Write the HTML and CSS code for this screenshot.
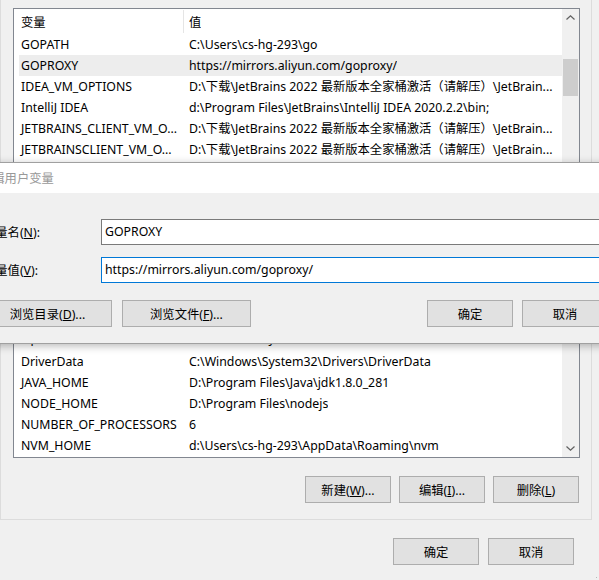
FILE: index.html
```html
<!DOCTYPE html>
<html lang="zh-CN">
<head>
<meta charset="utf-8">
<title>环境变量</title>
<link rel="stylesheet" href="styles.css">
</head>
<body>
<div class="window">
  <div class="frame">
    <div class="list">
      <div class="list-main">
        <div class="list-head">
          <div class="c1">变量</div>
          <div class="c2">值</div>
        </div>
        <div class="row"><div class="c1">GOPATH</div><div class="c2">C:\Users\cs-hg-293\go</div></div>
        <div class="row sel"><div class="c1">GOPROXY</div><div class="c2">https://mirrors.aliyun.com/goproxy/</div></div>
        <div class="row"><div class="c1">IDEA_VM_OPTIONS</div><div class="c2">D:\下载\JetBrains 2022 最新版本全家桶激活（请解压）\JetBrain...</div></div>
        <div class="row"><div class="c1">IntelliJ IDEA</div><div class="c2">d:\Program Files\JetBrains\IntelliJ IDEA 2020.2.2\bin;</div></div>
        <div class="row"><div class="c1">JETBRAINS_CLIENT_VM_O...</div><div class="c2">D:\下载\JetBrains 2022 最新版本全家桶激活（请解压）\JetBrain...</div></div>
        <div class="row"><div class="c1">JETBRAINSCLIENT_VM_O...</div><div class="c2">D:\下载\JetBrains 2022 最新版本全家桶激活（请解压）\JetBrain...</div></div>
        <div class="row"><div class="c1">JETBRAINS_GATEWAY_V...</div><div class="c2">D:\下载\JetBrains 2022 最新版本全家桶激活（请解压）\JetBrain...</div></div>
        <div class="row"><div class="c1">OneDrive</div><div class="c2">C:\Users\cs-hg-293\OneDrive</div></div>
        <div class="row"><div class="c1">Path</div><div class="c2">C:\Users\cs-hg-293\AppData\Local\Microsoft\WindowsApps;</div></div>
        <div class="row"><div class="c1">TEMP</div><div class="c2">C:\Users\cs-hg-293\AppData\Local\Temp</div></div>
        <div class="row"><div class="c1">TMP</div><div class="c2">C:\Users\cs-hg-293\AppData\Local\Temp</div></div>
        <div class="row"><div class="c1">ComSpec</div><div class="c2">C:\Windows\system32\cmd.exe</div></div>
        <div class="row"><div class="c1">ChocolateyInstall</div><div class="c2">C:\ProgramData\chocolatey</div></div>
        <div class="row"><div class="c1">configsetroot</div><div class="c2">C:\Windows\ConfigSetRoot</div></div>
        <div class="row"><div class="c1">OpenSSL</div><div class="c2">C:\Windows\System32\</div></div>
        <div class="row shifted"><div class="c1">DriverData</div><div class="c2">C:\Windows\System32\Drivers\DriverData</div></div>
        <div class="row"><div class="c1">JAVA_HOME</div><div class="c2">D:\Program Files\Java\jdk1.8.0_281</div></div>
        <div class="row"><div class="c1">NODE_HOME</div><div class="c2">D:\Program Files\nodejs</div></div>
        <div class="row"><div class="c1">NUMBER_OF_PROCESSORS</div><div class="c2">6</div></div>
        <div class="row"><div class="c1">NVM_HOME</div><div class="c2">d:\Users\cs-hg-293\AppData\Roaming\nvm</div></div>
      </div>
      <div class="vscroll">
        <div class="arrow">
          <svg width="9" height="5" viewBox="0 0 9 5"><path d="M0.5 4.5 L4.5 0.8 L8.5 4.5" fill="none" stroke="#606060" stroke-width="1.2"/></svg>
        </div>
        <div class="track"><div class="thumb"></div></div>
        <div class="arrow">
          <svg width="9" height="5" viewBox="0 0 9 5"><path d="M0.5 0.5 L4.5 4.2 L8.5 0.5" fill="none" stroke="#606060" stroke-width="1.2"/></svg>
        </div>
      </div>
    </div>
    <div class="btn-row">
      <button class="btn">新建(<u>W</u>)...</button>
      <button class="btn">编辑(<u>I</u>)...</button>
      <button class="btn">删除(<u>L</u>)</button>
    </div>
  </div>
  <div class="footer">
    <button class="btn">确定</button>
    <button class="btn">取消</button>
  </div>
</div>

<div class="grip"></div>

<div class="dialog">
  <div class="dlg-title">编辑用户变量</div>
  <div class="dlg-body">
    <div class="field">
      <label class="lbl">变量名(<u>N</u>):</label>
      <div class="input">GOPROXY</div>
    </div>
    <div class="field">
      <label class="lbl">变量值(<u>V</u>):</label>
      <div class="input focus">https://mirrors.aliyun.com/goproxy/</div>
    </div>
    <div class="dlg-buttons">
      <button class="btn wide">浏览目录(<u>D</u>)...</button>
      <button class="btn wide">浏览文件(<u>F</u>)...</button>
      <div class="spacer"></div>
      <button class="btn">确定</button>
      <button class="btn">取消</button>
    </div>
  </div>
</div>
</body>
</html>
```

FILE: styles.css
```css
html, body {
  margin: 0;
  padding: 0;
  width: 599px;
  height: 580px;
  overflow: hidden;
  background: #f0f0f0;
}
body {
  position: relative;
  font-family: "Noto Sans", "Noto Sans CJK SC", sans-serif;
  font-size: 12.3px;
  color: #000;
}
.window {
  width: 599px;
  height: 580px;
}
.frame {
  width: 592px;
  box-sizing: border-box;
  border: 1px solid #dcdcdc;
  border-top: none;
  padding: 8px 11px 16px 12px;
}
.list {
  width: 567px;
  height: 450px;
  box-sizing: border-box;
  border: 1px solid #828790;
  background: #fff;
  display: flex;
  overflow: hidden;
}
.list-main {
  flex: 1;
  padding-left: 5px;
  overflow: hidden;
}
.list-head, .row {
  display: flex;
  white-space: nowrap;
}
.list-head {
  height: 25px;
}
.list-head .c1, .list-head .c2 {
  height: 23px;
  margin-top: 1px;
  line-height: 25px;
}
.list-head .c1 {
  border-right: 1px solid #e5e5e5;
}
.row {
  height: 21px;
  line-height: 21px;
}
.row.shifted {
  height: 23px;
  line-height: 25px;
}
.row.sel {
  background: #ededed;
}
.c1 {
  width: 165px;
  box-sizing: border-box;
  padding-left: 2px;
  overflow: hidden;
}
.c2 {
  padding-left: 5px;
  overflow: hidden;
}
.vscroll {
  width: 17px;
  flex: none;
  background: #f0f0f0;
  display: flex;
  flex-direction: column;
}
.arrow {
  height: 17px;
  display: flex;
  align-items: center;
  justify-content: center;
}
.track {
  flex: 1;
  padding-top: 33px;
}
.thumb {
  height: 37px;
  margin: 0 1px;
  background: #cdcdcd;
}
.btn-row {
  display: flex;
  justify-content: flex-end;
  gap: 8px;
  margin-top: 18px;
  padding-right: 1px;
}
.btn {
  font: inherit;
  color: #000;
  width: 86px;
  height: 27px;
  box-sizing: border-box;
  border: 1px solid #adadad;
  background: #e1e1e1;
  padding: 0;
  margin: 0;
  white-space: nowrap;
}
.footer {
  display: flex;
  justify-content: flex-end;
  gap: 9px;
  margin-top: 18px;
  padding-right: 25px;
}
.grip {
  position: absolute;
  right: 1px;
  bottom: 1px;
  width: 3px;
  height: 3px;
  background: radial-gradient(circle, #b8b8b8 0.8px, transparent 1px) 0 0 / 3px 3px;
}
.dialog {
  position: absolute;
  left: -30px;
  top: 162px;
  width: 651px;
  height: 182px;
  box-sizing: border-box;
  border: 1px solid #a0a0a0;
  background: #f0f0f0;
  box-shadow: 0 2px 8px rgba(0, 0, 0, 0.28);
  display: flex;
  flex-direction: column;
}
.dlg-title {
  height: 30px;
  line-height: 31px;
  background: #fff;
  color: #999;
  padding-left: 9px;
  white-space: nowrap;
}
.dlg-body {
  padding: 26px 12px 0 12px;
  display: flex;
  flex-direction: column;
}
.field {
  display: flex;
  align-items: center;
  height: 26px;
  margin-bottom: 12px;
}
.lbl {
  width: 118px;
  flex: none;
  white-space: nowrap;
}
.input {
  flex: 1;
  height: 26px;
  box-sizing: border-box;
  border: 1px solid #7a7a7a;
  background: #fff;
  line-height: 24px;
  padding-left: 3px;
  white-space: nowrap;
}
.input.focus {
  border-color: #0078d7;
}
.dlg-buttons {
  display: flex;
  gap: 9px;
  margin-top: 5px;
}
.btn.wide {
  width: 129px;
}
.dlg-buttons .wide + .wide {
  margin-left: 1px;
}
.spacer {
  flex: 1;
}
```
